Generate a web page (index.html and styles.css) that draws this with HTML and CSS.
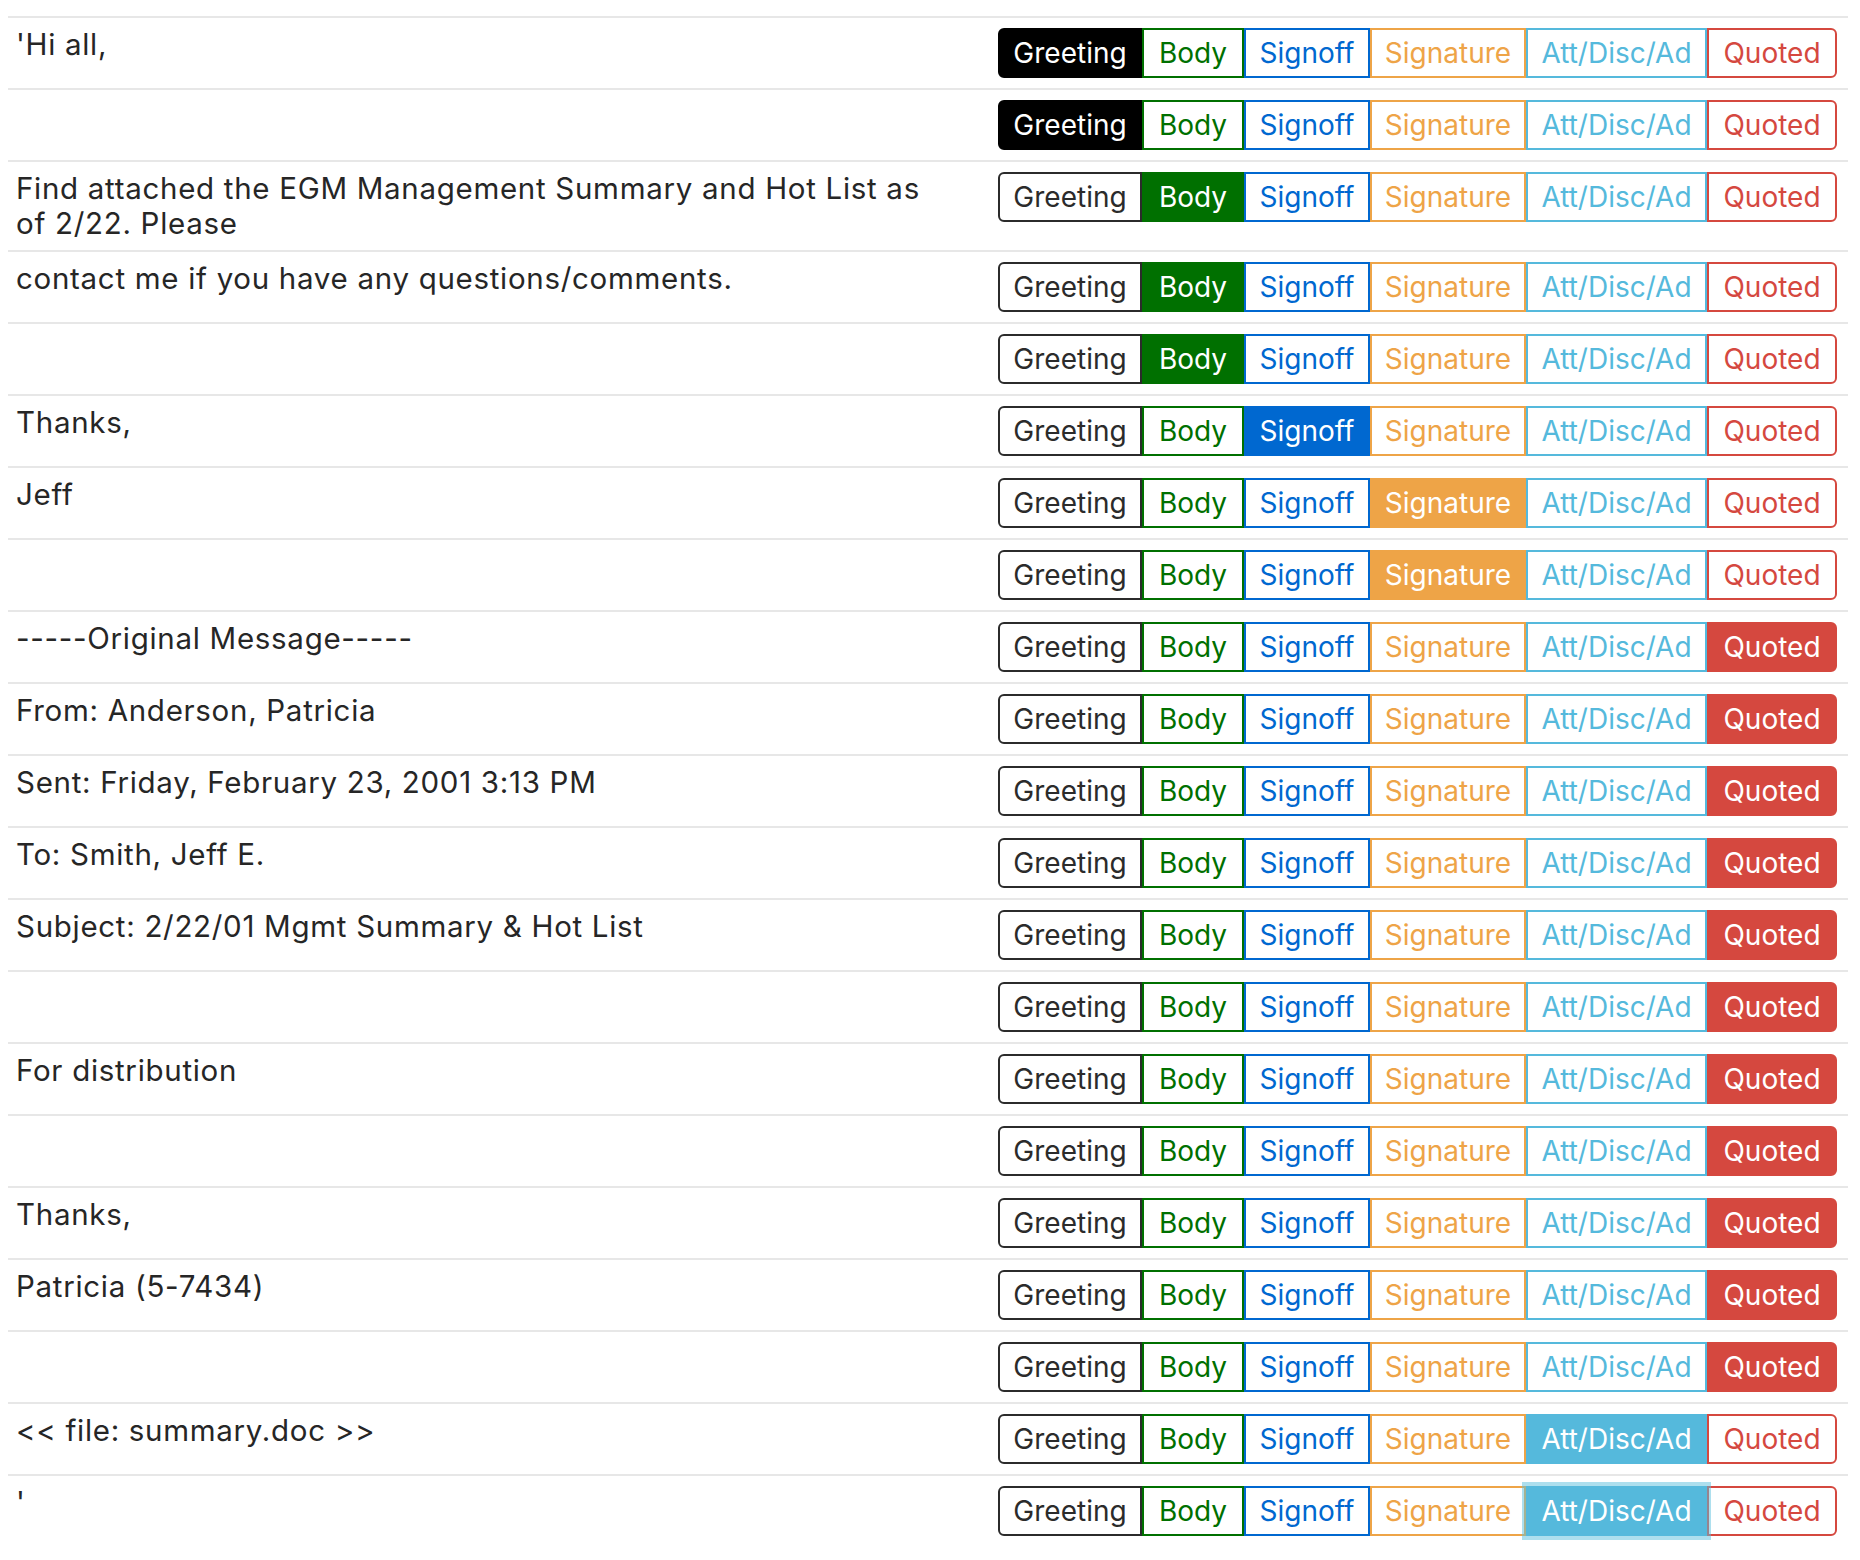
FILE: index.html
```html
<!DOCTYPE html>
<html lang="en">
<head>
    <meta charset="UTF-8">
    <meta name="viewport" content="width=device-width, initial-scale=1.0">
    <title>Email line labels</title>
    <link rel="stylesheet" href="styles.css">
</head>
<body>
    <div class="wrap">
        <table class="lines">
            <tbody id="line-rows"></tbody>
        </table>
    </div>

    <script>
        // label buttons, in the order they show up in every row
        const labels = [
            { key: 'greeting', text: 'Greeting' },
            { key: 'body', text: 'Body' },
            { key: 'signoff', text: 'Signoff' },
            { key: 'signature', text: 'Signature' },
            { key: 'att', text: 'Att/Disc/Ad' },
            { key: 'quoted', text: 'Quoted' }
        ];

        // one entry per email line: [text, chosen label]
        const lines = [
            ["'Hi all,", 'greeting'],
            ['', 'greeting'],
            ['Find attached the EGM Management Summary and Hot List as of 2/22. Please', 'body'],
            ['contact me if you have any questions/comments.', 'body'],
            ['', 'body'],
            ['Thanks,', 'signoff'],
            ['Jeff', 'signature'],
            ['', 'signature'],
            ['-----Original Message-----', 'quoted'],
            ['From: Anderson, Patricia', 'quoted'],
            ['Sent: Friday, February 23, 2001 3:13 PM', 'quoted'],
            ['To: Smith, Jeff E.', 'quoted'],
            ['Subject: 2/22/01 Mgmt Summary & Hot List', 'quoted'],
            ['', 'quoted'],
            ['For distribution', 'quoted'],
            ['', 'quoted'],
            ['Thanks,', 'quoted'],
            ['Patricia (5-7434)', 'quoted'],
            ['', 'quoted'],
            ['<< file: summary.doc >>', 'att'],
            ["'", 'att']
        ];

        const tbody = document.getElementById('line-rows');

        lines.forEach(function (line, i) {
            const row = document.createElement('tr');

            const textCell = document.createElement('td');
            textCell.className = 'line-text';
            textCell.textContent = line[0];
            row.appendChild(textCell);

            const tagCell = document.createElement('td');
            tagCell.className = 'line-tags';

            const group = document.createElement('div');
            group.className = 'btn-group';

            labels.forEach(function (label) {
                const btn = document.createElement('button');
                btn.type = 'button';
                btn.className = 'btn btn-' + label.key;
                btn.textContent = label.text;
                if (label.key === line[1]) {
                    btn.classList.add('active');
                }
                group.appendChild(btn);
            });

            // the last row still has focus on its button
            if (i === lines.length - 1) {
                group.querySelector('.active').classList.add('focus');
            }

            tagCell.appendChild(group);
            row.appendChild(tagCell);
            tbody.appendChild(row);
        });
    </script>
</body>
</html>
```

FILE: styles.css
```css
/* --- Page --- */
body {
    margin: 0;
    background-color: #fff;
    color: #262626;
    font-family: Inter, "Liberation Sans", Arial, sans-serif;
    font-size: 28px;
}

.wrap {
    padding: 16px 12px 0 8px;
}

/* --- Table of email lines --- */
.lines {
    width: 100%;
    border-collapse: collapse;
}

.lines td {
    border-top: 2px solid #e7e7e7;
    vertical-align: top;
}

.line-text {
    padding: 9px 45px 9px 8px;
    font-size: 29.5px;
    line-height: 35px;
    letter-spacing: 0.7px;
}

.line-tags {
    width: 1%;
    padding: 10px 11px 10px 10px;
    white-space: nowrap;
}

/* --- Button group --- */
.btn-group {
    display: flex;
}

.btn {
    position: relative;
    height: 50px;
    padding: 0;
    margin: 0;
    border: 2px solid #333;
    border-radius: 0;
    background-color: #fff;
    color: #333;
    font-family: inherit;
    font-size: 28px;
    line-height: 46px;
    text-align: center;
    cursor: pointer;
}

.btn:first-child {
    border-radius: 6px 0 0 6px;
}

.btn:last-child {
    border-radius: 0 6px 6px 0;
}

.btn.active {
    z-index: 2;
    color: #fff;
}

.btn.focus {
    z-index: 3;
    box-shadow: 0 0 0 4px rgba(91, 192, 222, 0.5);
}

/* each label keeps its own colour */
.btn-greeting { width: 144px; border-color: #2b2b2b; color: #2b2b2b; }
.btn-body { width: 102px; border-color: #007000; color: #007000; }
.btn-signoff { width: 126px; border-color: #0068d0; color: #0068d0; }
.btn-signature { width: 156px; border-color: #eea447; color: #eea447; }
.btn-att { width: 181px; border-color: #55b9dc; color: #55b9dc; }
.btn-quoted { width: 130px; border-color: #d5483f; color: #d5483f; }

.btn-greeting.active { background-color: #000; border-color: #000; }
.btn-body.active { background-color: #007000; }
.btn-signoff.active { background-color: #0068d0; }
.btn-signature.active { background-color: #eea447; }
.btn-att.active { background-color: #55b9dc; }
.btn-quoted.active { background-color: #d5483f; }
```
